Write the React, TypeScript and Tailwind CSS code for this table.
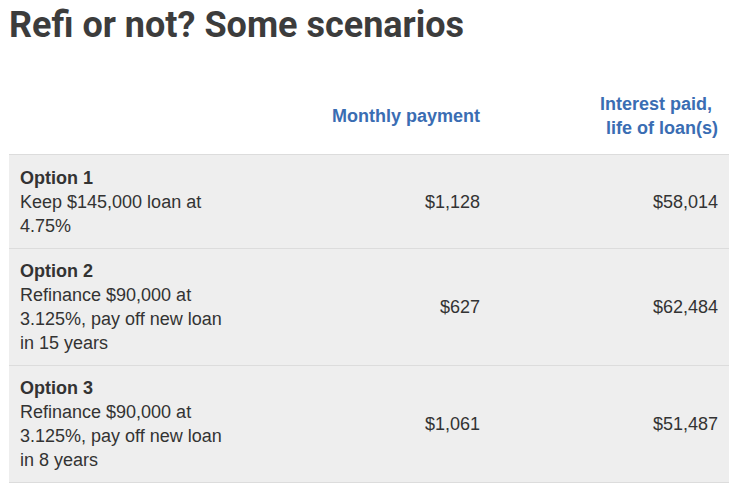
import React from "react";

const rows = [
  { title: "Option 1", lines: ["Keep $145,000 loan at", "4.75%"], monthly: "$1,128", interest: "$58,014", h: "h-[94px]" },
  { title: "Option 2", lines: ["Refinance $90,000 at", "3.125%, pay off new loan", "in 15 years"], monthly: "$627", interest: "$62,484", h: "h-[117px]" },
  { title: "Option 3", lines: ["Refinance $90,000 at", "3.125%, pay off new loan", "in 8 years"], monthly: "$1,061", interest: "$51,487", h: "h-[117px]" },
];

export default function App() {
  return (
    <div className="w-[739px] h-[496px] bg-white overflow-hidden">
      <h1 className="pl-[9px] pt-[3px] text-[36px] leading-[44px] font-bold text-[#3c3c3c] font-['Roboto',sans-serif]">
        Refi or not? Some scenarios
      </h1>
      <div className="ml-[9px] w-[720px] mt-[31px] font-['Liberation_Sans',Arial,sans-serif] text-[18px] leading-[24px] text-[#333333]">
        <div className="grid grid-cols-[230px_251px_239px] items-center h-[77px] border-b border-[#dcdcdc] text-[#3a6db3] font-bold">
          <div />
          <div className="text-right pr-[10px]">Monthly payment</div>
          <div className="text-right pr-[11px]">
            <div className="pr-[6px]">Interest paid,</div>
            <div>life of loan(s)</div>
          </div>
        </div>
        {rows.map((r) => (
          <div key={r.title} className={`grid grid-cols-[230px_251px_239px] items-center bg-[#eeeeee] border-b border-[#dcdcdc] ${r.h}`}>
            <div className="pl-[11px]">
              <div className="font-bold">{r.title}</div>
              {r.lines.map((l) => (
                <div key={l} className="whitespace-nowrap">{l}</div>
              ))}
            </div>
            <div className="text-right pr-[10px]">{r.monthly}</div>
            <div className="text-right pr-[11px]">{r.interest}</div>
          </div>
        ))}
      </div>
    </div>
  );
}
